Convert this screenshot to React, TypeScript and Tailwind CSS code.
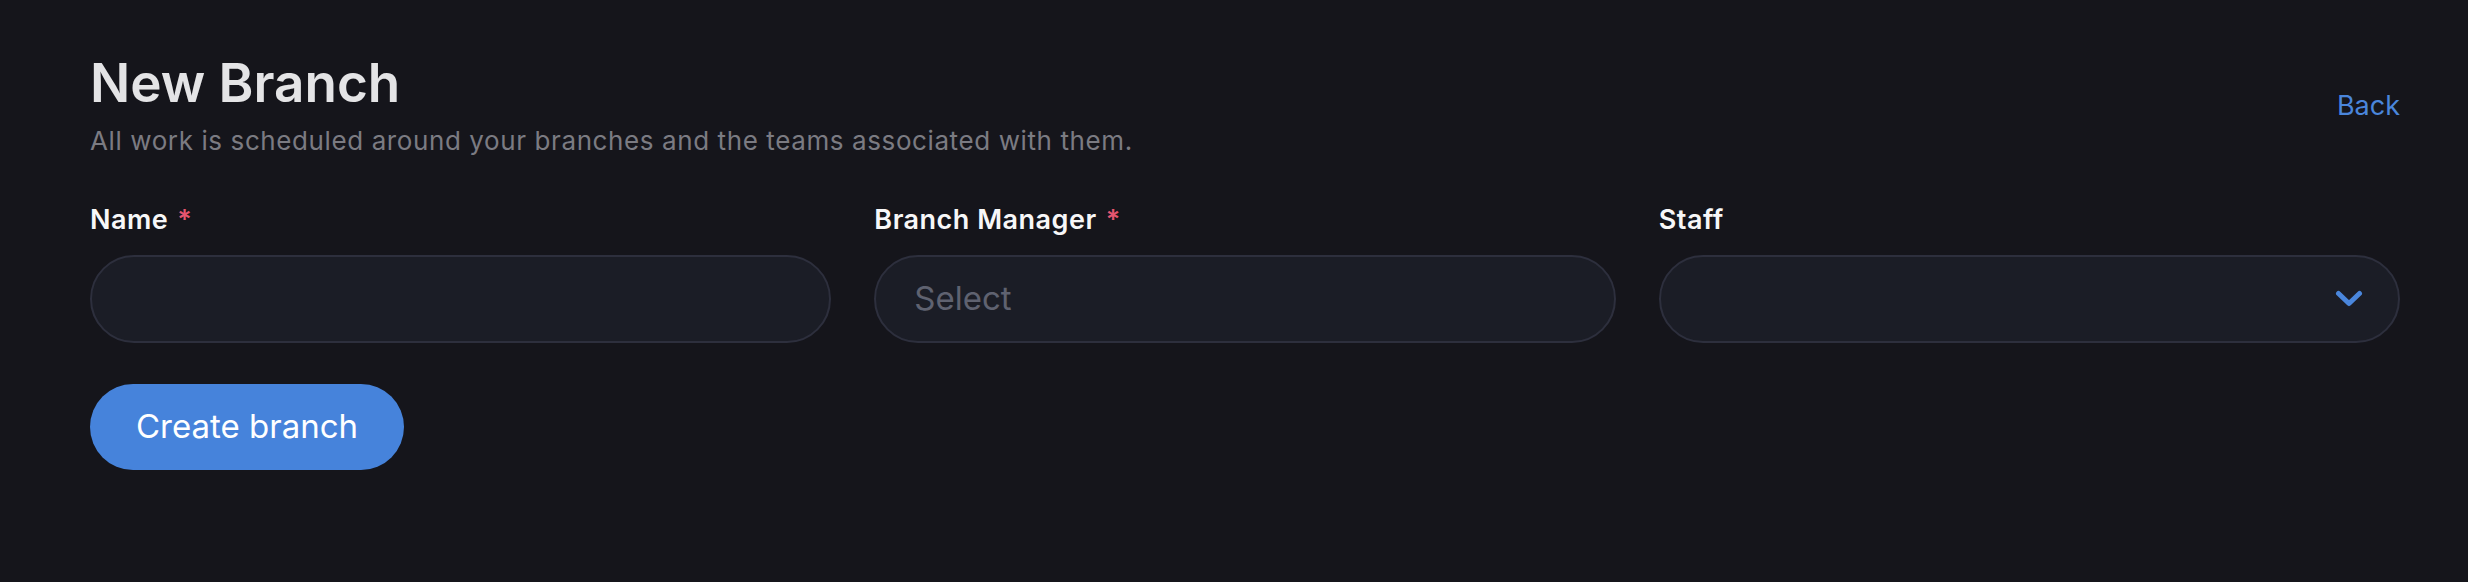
import { useState } from "react";

interface FieldProps {
  label: string;
  required?: boolean;
  children: React.ReactNode;
}

function Field({ label, required, children }: FieldProps) {
  return (
    <div className="flex flex-col">
      <label className="text-[27px] leading-[34px] font-semibold tracking-[0.5px] text-[#f7f7f8]">
        {label}
        {required && <span className="ml-[9px] text-[#e5556f]">*</span>}
      </label>
      <div className="mt-[18px]">{children}</div>
    </div>
  );
}

function Chevron() {
  return (
    <svg width="28" height="20" viewBox="0 0 28 20" fill="none">
      <polyline
        points="3.5,4.5 14,14.5 24.5,4.5"
        stroke="#4a86dc"
        strokeWidth="5"
        strokeLinecap="round"
        strokeLinejoin="round"
      />
    </svg>
  );
}

export default function App() {
  const [name, setName] = useState("");

  return (
    <div className="min-h-screen w-full bg-[#15151b] pl-[90px] pr-[68px] pt-[53px] font-[Inter,'Noto_Sans',sans-serif]">
      {/* header */}
      <div className="flex items-center justify-between">
        <div>
          <h1 className="text-[53px] leading-[60px] font-semibold text-[#e4e4e6]">
            New Branch
          </h1>
          <p className="mt-[10px] text-[26px] leading-[36px] tracking-[0.6px] text-[#7b7b82]">
            All work is scheduled around your branches and the teams associated with them.
          </p>
        </div>
        <a href="#" className="text-[27px] leading-[34px] text-[#4a86dc]">
          Back
        </a>
      </div>

      {/* form */}
      <div className="mt-[44px] grid grid-cols-3 gap-x-[43px]">
        <Field label="Name" required>
          <input
            value={name}
            onChange={(e) => setName(e.target.value)}
            className="h-[88px] w-full rounded-full border-2 border-[#2d2f3d] bg-[#1b1d26] px-[40px] text-[33px] text-[#e4e4e6] outline-none"
          />
        </Field>

        <Field label="Branch Manager" required>
          <div className="flex h-[88px] w-full items-center rounded-full border-2 border-[#2d2f3d] bg-[#1b1d26] px-[38px] text-[33px] text-[#5f6270]">
            Select
          </div>
        </Field>

        <Field label="Staff">
          <div className="flex h-[88px] w-full items-center justify-end rounded-full border-2 border-[#2d2f3d] bg-[#1b1d26] pr-[35px]">
            <Chevron />
          </div>
        </Field>
      </div>

      <button className="mt-[41px] h-[86px] rounded-full bg-[#4683db] px-[46px] text-[33px] text-white">
        Create branch
      </button>
    </div>
  );
}
